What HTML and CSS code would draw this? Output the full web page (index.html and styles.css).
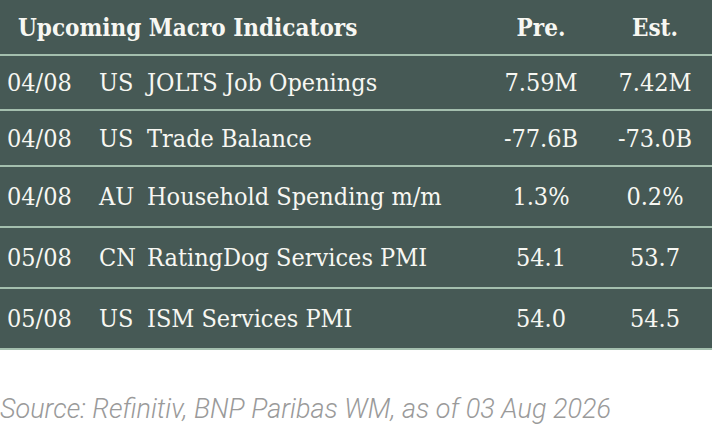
FILE: index.html
```html
<!DOCTYPE html>
<html lang="en">
<head>
<meta charset="utf-8">
<title>Upcoming Macro Indicators</title>
<link rel="stylesheet" href="styles.css">
</head>
<body>
<div class="panel">
  <div class="row head">
    <div class="title">Upcoming Macro Indicators</div>
    <div class="num">Pre.</div>
    <div class="num">Est.</div>
  </div>
  <div class="row r-short">
    <div class="date">04/08</div><div class="cty">US</div><div class="desc">JOLTS Job Openings</div>
    <div class="num">7.59M</div><div class="num">7.42M</div>
  </div>
  <div class="row r-mid">
    <div class="date">04/08</div><div class="cty">US</div><div class="desc">Trade Balance</div>
    <div class="num">-77.6B</div><div class="num">-73.0B</div>
  </div>
  <div class="row">
    <div class="date">04/08</div><div class="cty">AU</div><div class="desc">Household Spending m/m</div>
    <div class="num">1.3%</div><div class="num">0.2%</div>
  </div>
  <div class="row">
    <div class="date">05/08</div><div class="cty">CN</div><div class="desc">RatingDog Services PMI</div>
    <div class="num">54.1</div><div class="num">53.7</div>
  </div>
  <div class="row last">
    <div class="date">05/08</div><div class="cty">US</div><div class="desc">ISM Services PMI</div>
    <div class="num">54.0</div><div class="num">54.5</div>
  </div>
</div>
<p class="source">Source: Refinitiv, BNP Paribas WM, as of 03 Aug 2026</p>
</body>
</html>
```
FILE: styles.css
```css
html, body {
  margin: 0;
  padding: 0;
  background: #ffffff;
  width: 712px;
}
.panel {
  background: #465955;
  color: #f7f7f2;
  font-family: "DejaVu Serif Condensed", "DejaVu Serif", serif;
  font-stretch: condensed;
  font-size: 25px;
}
.row {
  display: grid;
  grid-template-columns: 99px 48px 1fr 114px 114px;
  align-items: center;
  height: 59px;
  border-bottom: 2px solid #a4bfae;
}
.row.r-short { height: 53px; }
.row.r-mid { height: 54px; }
.row.head {
  grid-template-columns: 1fr 114px 114px;
  height: 54px;
  font-size: 24px;
}
.title {
  font-weight: bold;
  padding-left: 18px;
}
.head .num { font-weight: bold; }
.date { padding-left: 7px; }
.num { text-align: center; }
.source {
  margin: 43px 0 0 0;
  font-family: Roboto, "Liberation Sans", sans-serif;
  font-style: italic;
  font-weight: 300;
  font-size: 27px;
  line-height: 32px;
  color: #9a9a9a;
  white-space: nowrap;
}
```
